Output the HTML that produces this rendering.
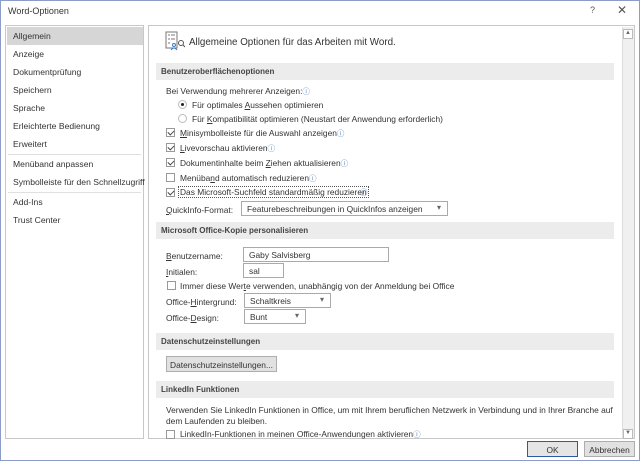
<!DOCTYPE html>
<html><head><meta charset="utf-8"><style>
*{margin:0;padding:0;box-sizing:border-box}
body{width:640px;height:461px;overflow:hidden;background:#fff;font-family:"Liberation Sans",sans-serif;font-size:8.4px;color:#333;position:relative}
.a{position:absolute;white-space:nowrap}
.frame{position:absolute;left:0;top:0;width:640px;height:461px;border:1px solid #8a9cc7}
.nav{position:absolute;left:5px;top:25px;width:139px;height:414px;border:1px solid #c8c8c8;background:#fff}
.nav .t{position:absolute;left:7px;white-space:nowrap;font-size:8.6px}
.nav .sel{position:absolute;left:1px;top:1px;width:136px;height:18px;background:#d6d6d6}
.nav .sep{position:absolute;left:2px;width:133px;height:1px;background:#e0e0e0}
.main{position:absolute;left:148px;top:25px;width:487px;height:414px;border:1px solid #c8c8c8;background:#fff}
.hdr{position:absolute;left:156px;width:458px;height:17px;background:#ececec;font-weight:bold;color:#444;padding:4px 0 0 5px;font-size:8px}
.cb{position:absolute;width:9px;height:9px;border:1px solid #999;background:#fff}
.cb.c::after{content:"";position:absolute;left:2px;top:0px;width:3px;height:5px;border:solid #444;border-width:0 1px 1px 0;transform:rotate(45deg)}
.rad{position:absolute;width:9px;height:9px;border-radius:50%;border:1px solid #bbb}
.i{color:#4a7ab5;font-size:7.5px}
.box{position:absolute;border:1px solid #aaa;background:#fff;padding:2px 0 0 5px;height:15px;white-space:nowrap}
.dd::after{content:"▾";position:absolute;right:6px;top:1px;color:#666;font-size:8px}
.btn{position:absolute;border:1px solid #adadad;background:#e1e1e1;text-align:center;padding-top:3px;height:16px;white-space:nowrap}
</style></head><body>
<div class="frame"></div>
<div class="a" style="left:8px;top:6px;font-size:9px">Word-Optionen</div>
<div class="a" style="left:590px;top:5px;color:#555;font-size:9px">?</div>
<div class="a" style="left:617px;top:3px;color:#555;font-size:12px">✕</div>

<div class="nav">
<div class="sel"></div>
<div class="t" style="top:5px">Allgemein</div>
<div class="t" style="top:23px">Anzeige</div>
<div class="t" style="top:41px">Dokumentprüfung</div>
<div class="t" style="top:59px">Speichern</div>
<div class="t" style="top:77px">Sprache</div>
<div class="t" style="top:95px">Erleichterte Bedienung</div>
<div class="t" style="top:113px">Erweitert</div>
<div class="sep" style="top:128px"></div>
<div class="t" style="top:133px">Menüband anpassen</div>
<div class="t" style="top:151px">Symbolleiste für den Schnellzugriff</div>
<div class="sep" style="top:166px"></div>
<div class="t" style="top:171px">Add-Ins</div>
<div class="t" style="top:189px">Trust Center</div>
</div>

<div class="main"></div>
<div class="a" style="left:622px;top:27px;width:12px;height:411px;background:#f0f0f0;border-left:1px solid #ddd"></div>
<div class="a" style="left:623px;top:29px;width:10px;height:10px;border:1px solid #bbb;background:#fff;font-size:6px;text-align:center;color:#666">▲</div>
<div class="a" style="left:623px;top:429px;width:10px;height:10px;border:1px solid #bbb;background:#fff;font-size:6px;text-align:center;color:#666">▼</div>

<svg class="a" style="left:165px;top:31px" width="20" height="20" viewBox="0 0 20 20"><rect x="1" y="1" width="11" height="16" fill="none" stroke="#777"/><path d="M3 4h2M3 8h2M3 12h2M6 4h4M6 8h4" stroke="#777"/><circle cx="16" cy="12" r="2.5" fill="none" stroke="#555"/><path d="M18 14l2 2" stroke="#555"/><circle cx="9" cy="14" r="1.5" fill="none" stroke="#3b7cc5"/><path d="M6 19q3-4 6 0" fill="none" stroke="#3b7cc5"/></svg>
<div class="a" style="left:189px;top:37px;font-size:9.8px">Allgemeine Optionen für das Arbeiten mit Word.</div>

<div class="hdr" style="top:63px">Benutzeroberflächenoptionen</div>
<div class="a" style="left:166px;top:86px">Bei Verwendung mehrerer Anzeigen:<span class="i">ⓘ</span></div>
<div class="rad" style="left:178px;top:100px"><div style="position:absolute;left:2px;top:2px;width:3px;height:3px;border-radius:50%;background:#222"></div></div>
<div class="a" style="left:192px;top:100px">Für optimales <u>A</u>ussehen optimieren</div>
<div class="rad" style="left:178px;top:114px"></div>
<div class="a" style="left:192px;top:114px">Für <u>K</u>ompatibilität optimieren (Neustart der Anwendung erforderlich)</div>
<div class="cb c" style="left:166px;top:128px"></div>
<div class="a" style="left:180px;top:128px"><u>M</u>inisymbolleiste für die Auswahl anzeigen<span class="i">ⓘ</span></div>
<div class="cb c" style="left:166px;top:143px"></div>
<div class="a" style="left:180px;top:143px"><u>L</u>ivevorschau aktivieren<span class="i">ⓘ</span></div>
<div class="cb c" style="left:166px;top:158px"></div>
<div class="a" style="left:180px;top:158px">Dokumentinhalte beim <u>Z</u>iehen aktualisieren<span class="i">ⓘ</span></div>
<div class="cb" style="left:166px;top:173px"></div>
<div class="a" style="left:180px;top:173px">Menüba<u>n</u>d automatisch reduzieren<span class="i">ⓘ</span></div>
<div class="cb c" style="left:166px;top:188px"></div>
<div class="a" style="left:178px;top:186px;border:1px dotted #555;padding:0 1px;height:12px">Das Microsoft-Suchfeld standardmäßig reduzieren</div><div class="a i" style="left:360px;top:187px">ⓘ</div>
<div class="a" style="left:166px;top:205px"><u>Q</u>uickInfo-Format:</div>
<div class="box dd" style="left:241px;top:201px;width:207px">Featurebeschreibungen in QuickInfos anzeigen</div>

<div class="hdr" style="top:222px">Microsoft Office-Kopie personalisieren</div>
<div class="a" style="left:166px;top:251px"><u>B</u>enutzername:</div>
<div class="box" style="left:243px;top:247px;width:146px">Gaby Salvisberg</div>
<div class="a" style="left:166px;top:267px"><u>I</u>nitialen:</div>
<div class="box" style="left:243px;top:263px;width:41px">sal</div>
<div class="cb" style="left:167px;top:281px"></div>
<div class="a" style="left:180px;top:281px">Immer diese Wer<u>t</u>e verwenden, unabhängig von der Anmeldung bei Office</div>
<div class="a" style="left:166px;top:297px">Office-<u>H</u>intergrund:</div>
<div class="box dd" style="left:244px;top:293px;width:87px">Schaltkreis</div>
<div class="a" style="left:166px;top:313px">Office-<u>D</u>esign:</div>
<div class="box dd" style="left:244px;top:309px;width:62px">Bunt</div>

<div class="hdr" style="top:333px">Datenschutzeinstellungen</div>
<div class="btn" style="left:166px;top:356px;width:111px">Datenschutzeinstellungen...</div>

<div class="hdr" style="top:381px">LinkedIn Funktionen</div>
<div class="a" style="left:166px;top:405px">Verwenden Sie LinkedIn Funktionen in Office, um mit Ihrem beruflichen Netzwerk in Verbindung und in Ihrer Branche auf</div>
<div class="a" style="left:166px;top:416px">dem Laufenden zu bleiben.</div>
<div class="cb" style="left:166px;top:430px"></div>
<div class="a" style="left:180px;top:429px">LinkedIn-Funktionen in meinen Office-Anwendungen aktivieren<span class="i">ⓘ</span></div>

<div class="btn" style="left:527px;top:441px;width:51px;border:1px solid #2c5c9e;background:#e5e5e5">OK</div>
<div class="btn" style="left:584px;top:441px;width:51px">Abbrechen</div>
</body></html>
